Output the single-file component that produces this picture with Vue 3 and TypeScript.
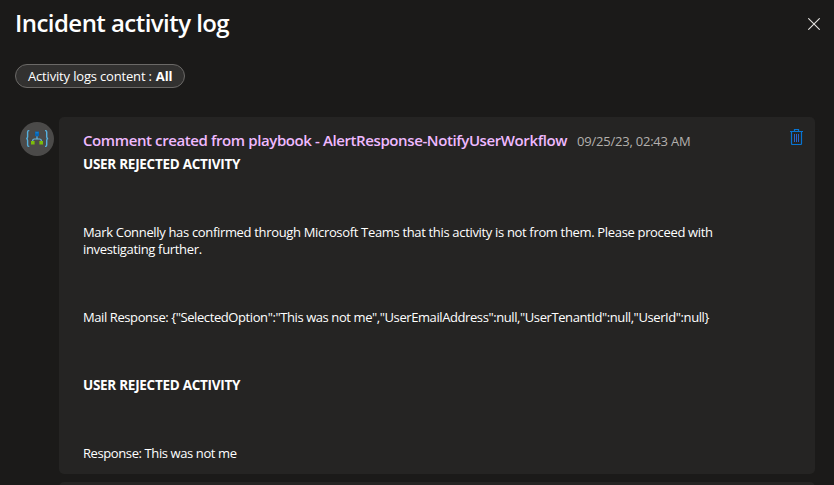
<script setup lang="ts">
import { ref } from 'vue'

interface Line {
  text: string
  kind: 'strong' | 'wide' | 'mail' | 'short'
}

const filterValue = ref('All')
const lines: Line[] = [
  { text: 'USER REJECTED ACTIVITY', kind: 'strong' },
  {
    text: 'Mark Connelly has confirmed through Microsoft Teams that this activity is not from them. Please proceed with\ninvestigating further.',
    kind: 'wide',
  },
  {
    text: 'Mail Response: {"SelectedOption":"This was not me","UserEmailAddress":null,"UserTenantId":null,"UserId":null}',
    kind: 'mail',
  },
  { text: 'USER REJECTED ACTIVITY', kind: 'strong' },
  { text: 'Response: This was not me', kind: 'short' },
]
</script>

<template>
  <section class="panel">
    <header class="head">
      <h1>Incident activity log</h1>
      <button class="close" aria-label="Close">
        <svg width="12" height="12" viewBox="0 0 12 12">
          <path d="M.3 .3 11.7 11.7M11.7 .3 .3 11.7" stroke="#e4e2e0" stroke-width="1.1" />
        </svg>
      </button>
    </header>
    <button class="pill">
      <span>Activity logs content :</span><b>{{ filterValue }}</b>
    </button>
    <div class="entry">
      <div class="avatar">
        <svg width="34" height="34" viewBox="0 0 34 34" fill="none">
          <path d="M9.3 8.6H8.7Q7.6 8.6 7.6 10V15Q7.6 16.3 6.3 16.6Q7.6 16.9 7.6 18.4V23Q7.6 24.4 8.7 24.4H9.3" stroke="#55b0de" stroke-width="1.4" />
          <path d="M25 8.6h.6Q26.7 8.6 26.7 10V15Q26.7 16.3 28 16.6Q26.7 16.9 26.7 18.4V23Q26.7 24.4 25.6 24.4H25" stroke="#55b0de" stroke-width="1.4" />
          <path d="M17 14V16.8M12.7 19.5V18.6Q12.7 17 14.4 17H19.6Q21.3 17 21.3 18.6V19.5" stroke="#69b6dc" stroke-width="1.2" />
          <path d="M15 9.5H19V13.2Q18.7 14.6 17 14.6T15 13.2Z" fill="#0864b4" />
          <path d="M15.6 10.8H18.4" stroke="#1688d8" />
          <path d="M11 19h3.6v3.5h-3.6zM19.4 19h3.6v3.5h-3.6z" fill="#7cbc0a" />
        </svg>
      </div>
      <article class="card">
        <div class="card-head">
          <h2>Comment created from playbook - AlertResponse-NotifyUserWorkflow</h2>
          <time>09/25/23, 02:43 AM</time>
          <button class="remove" aria-label="Delete">
            <svg width="13" height="16" viewBox="0 0 13 16" fill="none" stroke="#0874d2">
              <path d="M0 2.5H13M4.5 2.5V.5H8.5V2.5M1.5 2.5V14.5Q1.5 15.5 2.5 15.5H10.5Q11.5 15.5 11.5 14.5V2.5" stroke-width="1.2" />
              <path d="M4.5 5V13M6.5 5V13M8.5 5V13" stroke="#2862ca" />
            </svg>
          </button>
        </div>
        <p v-for="(line, i) in lines" :key="i" :class="line.kind">{{ line.text }}</p>
      </article>
    </div>
    <div class="next-card"></div>
  </section>
</template>

<style>
body {
  background: #1b1a19;
}
</style>

<style scoped>
.panel {
  box-sizing: border-box;
  height: 485px;
  overflow: hidden;
  background: #1b1a19;
  color: #fff;
  font-family: 'Open Sans', 'Noto Sans', sans-serif;
  font-size: 13px;
}
button {
  margin: 0;
  padding: 0;
  border: 0;
  background: none;
  color: inherit;
  font: inherit;
}
svg {
  display: block;
}
.head {
  display: flex;
  justify-content: space-between;
  height: 64px;
  padding: 0 14px 0 15px;
}
h1 {
  margin: 7px 0 0;
  font-size: 24px;
  line-height: 32px;
  font-weight: 600;
  letter-spacing: -0.55px;
}
.close {
  height: 12px;
  margin-top: 18px;
}
.pill {
  display: flex;
  align-items: center;
  gap: 4px;
  box-sizing: border-box;
  width: 170px;
  height: 24px;
  margin-left: 15px;
  padding: 0 0 0 12px;
  border: 1px solid #6b6967;
  border-radius: 12px;
  background: #323130;
  font-size: 13px;
  letter-spacing: -0.17px;
  white-space: nowrap;
}
.entry {
  display: flex;
  align-items: flex-start;
  gap: 5px;
  margin: 29px 19px 0 20px;
}
.avatar {
  flex: none;
  width: 34px;
  height: 34px;
  margin-top: 5px;
  border-radius: 50%;
  background: #4b4a49;
}
.card {
  flex: 1;
  box-sizing: border-box;
  height: 357px;
  padding: 13px 12px 0 24px;
  border-radius: 5px;
  background: #252423;
}
.card-head {
  display: flex;
  height: 26px;
  white-space: nowrap;
}
h2 {
  margin: 0;
  color: #efb9ff;
  font-size: 15px;
  line-height: 20px;
  font-weight: 600;
  letter-spacing: -0.4px;
}
time {
  margin-left: 10px;
  color: #b3b0ad;
  font-size: 13px;
  line-height: 23px;
  letter-spacing: -0.22px;
}
.remove {
  height: 16px;
  margin: -1px 0 0 auto;
}
p {
  margin: 0 0 51px;
  line-height: 17px;
  white-space: pre;
}
.strong {
  font-size: 13.5px;
  font-weight: 700;
  letter-spacing: -0.28px;
}
.wide {
  letter-spacing: -0.333px;
}
.mail {
  letter-spacing: -0.41px;
}
.short {
  letter-spacing: -0.4px;
}
.next-card {
  height: 20px;
  margin: 8px 19px 0 59px;
  border-radius: 5px;
  background: #252423;
}
</style>
